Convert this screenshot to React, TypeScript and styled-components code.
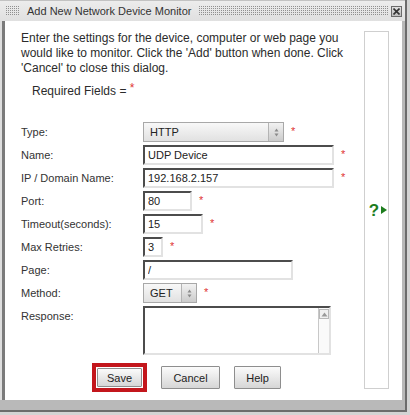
import styled, { createGlobalStyle } from "styled-components";

const GlobalStyle = createGlobalStyle`
  html, body {
    margin: 0;
    padding: 0;
    background: #d4d4d4;
  }
  body {
    font-family: "Liberation Sans", Arial, sans-serif;
  }
`;

type Row = {
  label: string;
  kind: "input" | "select" | "area";
  value?: string;
  width: number;
  required?: boolean;
};

const rows: Row[] = [
  { label: "Type:", kind: "select", value: "HTTP", width: 141, required: true },
  { label: "Name:", kind: "input", value: "UDP Device", width: 191, required: true },
  { label: "IP / Domain Name:", kind: "input", value: "192.168.2.157", width: 191, required: true },
  { label: "Port:", kind: "input", value: "80", width: 49, required: true },
  { label: "Timeout(seconds):", kind: "input", value: "15", width: 60, required: true },
  { label: "Max Retries:", kind: "input", value: "3", width: 20, required: true },
  { label: "Page:", kind: "input", value: "/", width: 150 },
  { label: "Method:", kind: "select", value: "GET", width: 54, required: true },
  { label: "Response:", kind: "area", width: 188 },
];

export default function App() {
  return (
    <>
      <GlobalStyle />
      <Window>
        <TitleBar>
          <Dots $w={14} />
          <Title>Add New Network Device Monitor</Title>
          <Dots />
          <CloseButton title="Close">
            <svg width="7" height="7" viewBox="0 0 7 7">
              <path d="M0.5 0.5 L6.5 6.5 M6.5 0.5 L0.5 6.5" stroke="#333" strokeWidth="1.6" />
            </svg>
          </CloseButton>
        </TitleBar>

        <Frame>
          <Main>
            <Intro>
              Enter the settings for the device, computer or web page you would like to
              monitor. Click the 'Add' button when done. Click 'Cancel' to close this dialog.
            </Intro>
            <Required>
              Required Fields = <ReqStar>*</ReqStar>
            </Required>

            <Form>
              {rows.map((r) => (
                <FormRow key={r.label}>
                  <Label>{r.label}</Label>
                  <Field>
                    {r.kind === "input" && <TextInput $w={r.width} defaultValue={r.value} />}
                    {r.kind === "select" && (
                      <SelectBox $w={r.width}>
                        <SelectText>{r.value}</SelectText>
                        <Spinner>
                          <svg width="5" height="9" viewBox="0 0 5 9">
                            <path d="M2.5 0.5 L4.5 3.5 L0.5 3.5 Z" fill="#8a8a8a" />
                            <path d="M2.5 8.5 L4.5 5.5 L0.5 5.5 Z" fill="#8a8a8a" />
                          </svg>
                        </Spinner>
                      </SelectBox>
                    )}
                    {r.kind === "area" && (
                      <AreaBox $w={r.width}>
                        <AreaText />
                        <ScrollBar>
                          <ScrollButton>
                            <svg width="7" height="5" viewBox="0 0 7 5">
                              <path d="M3.5 0.5 L6.5 4.5 L0.5 4.5 Z" fill="#9a9a9a" />
                            </svg>
                          </ScrollButton>
                        </ScrollBar>
                      </AreaBox>
                    )}
                    {r.required && <Star>*</Star>}
                  </Field>
                </FormRow>
              ))}
            </Form>

            <Buttons>
              <SaveFrame>
                <Button $w={45} $h={19}>Save</Button>
              </SaveFrame>
              <Button $w={59} $h={23}>Cancel</Button>
              <Button $w={47} $h={23}>Help</Button>
            </Buttons>
          </Main>

          <HelpRail>
            <HelpIcon>
              <QMark>?</QMark>
              <svg width="6" height="8" viewBox="0 0 6 8">
                <path d="M0 0 L6 4 L0 8 Z" fill="#1d7d1d" />
              </svg>
            </HelpIcon>
          </HelpRail>
        </Frame>
      </Window>
    </>
  );
}

const Window = styled.div`
  width: 407px;
  height: 412px;
  box-sizing: border-box;
  border-right: 2px solid #6c6c6c;
  border-bottom: 2px solid #6c6c6c;
  background: #b9b9b9;
  display: flex;
  flex-direction: column;
`;

const TitleBar = styled.div`
  height: 21px;
  box-sizing: border-box;
  border-top: 1px solid #c2c2c2;
  background: linear-gradient(#ececec, #e0e0e0);
  display: flex;
  align-items: center;
  padding: 0 3px 0 5px;
`;

const Dots = styled.div<{ $w?: number }>`
  ${(p) => (p.$w ? `width: ${p.$w}px;` : "flex: 1;")}
  height: 10px;
  background: conic-gradient(#909090 25%, transparent 0) 0 0 / 2px 2px;
`;

const Title = styled.span`
  margin: 0 7px 0 8px;
  font-size: 11px;
  color: #333;
  white-space: nowrap;
`;

const CloseButton = styled.div`
  width: 11px;
  height: 11px;
  box-sizing: border-box;
  margin-left: 3px;
  border: 1px solid #6a6a6a;
  background: linear-gradient(#e0e0e0, #bdbdbd);
  display: flex;
  align-items: center;
  justify-content: center;
`;

const Frame = styled.div`
  flex: 1;
  display: flex;
  margin: 0 3px 10px 2px;
  border-left: 3px solid #7b7b7b;
  box-shadow: -2px 0 0 #dedede;
  background: #fff;
`;

const Main = styled.div`
  flex: 1;
  padding: 10px 0 0 16px;
  color: #2b2b2b;
`;

const Intro = styled.p`
  margin: 0;
  font-size: 12px;
  line-height: 15px;
`;

const Required = styled.div`
  margin: 8px 0 0 11px;
  font-size: 12px;
  line-height: 15px;
`;

const ReqStar = styled.span`
  color: #e03434;
  font-size: 12px;
  vertical-align: top;
  position: relative;
  top: -3px;
`;

const Star = styled.span`
  color: #e03434;
  font-size: 11px;
  line-height: 1;
  padding-top: 4px;
`;

const Form = styled.div`
  margin-top: 23px;
  display: flex;
  flex-direction: column;
  gap: 3px;
`;

const FormRow = styled.div`
  display: grid;
  grid-template-columns: 122px 1fr;
`;

const Label = styled.div`
  font-size: 11px;
  line-height: 20px;
  color: #333;
`;

const Field = styled.div`
  display: flex;
  align-items: flex-start;
  gap: 7px;
`;

const TextInput = styled.input<{ $w: number }>`
  width: ${(p) => p.$w}px;
  height: 20px;
  box-sizing: border-box;
  margin: 0;
  padding: 0 3px;
  border-style: solid;
  border-width: 2px;
  border-color: #4c4c4c #e2e2e2 #e2e2e2 #4c4c4c;
  background: #fff;
  font-family: "Liberation Sans", Arial, sans-serif;
  font-size: 11px;
  color: #222;
  outline: none;
`;

const SelectBox = styled.div<{ $w: number }>`
  width: ${(p) => p.$w}px;
  height: 20px;
  box-sizing: border-box;
  border: 1px solid #a8a8a8;
  background: linear-gradient(#f8f8f8, #e1e1e1);
  display: flex;
`;

const SelectText = styled.span`
  flex: 1;
  padding-left: 6px;
  font-size: 11px;
  line-height: 18px;
  color: #222;
`;

const Spinner = styled.span`
  width: 15px;
  box-sizing: border-box;
  border-left: 1px solid #b4b4b4;
  background: linear-gradient(#f2f2f2, #cbcbcb);
  display: flex;
  align-items: center;
  justify-content: center;
`;

const AreaBox = styled.div<{ $w: number }>`
  width: ${(p) => p.$w}px;
  height: 49px;
  box-sizing: border-box;
  border-style: solid;
  border-width: 2px;
  border-color: #4c4c4c #e2e2e2 #e2e2e2 #4c4c4c;
  display: flex;
`;

const AreaText = styled.div`
  flex: 1;
`;

const ScrollBar = styled.div`
  width: 11px;
  box-sizing: border-box;
  border-left: 1px solid #c8c8c8;
  padding-top: 1px;
  background: #fafafa;
`;

const ScrollButton = styled.div`
  height: 10px;
  box-sizing: border-box;
  border: 1px solid #b8b8b8;
  background: #f0f0f0;
  display: flex;
  align-items: center;
  justify-content: center;
`;

const Buttons = styled.div`
  margin-top: 8px;
  padding-left: 71px;
  display: flex;
  align-items: center;
  gap: 14px;
`;

const SaveFrame = styled.div`
  border: 4px solid #c3161c;
  padding: 1px;
  display: flex;
`;

const Button = styled.button<{ $w: number; $h: number }>`
  width: ${(p) => p.$w}px;
  height: ${(p) => p.$h}px;
  box-sizing: border-box;
  margin: 0;
  padding: 0;
  border: 1px solid #8e8e8e;
  border-radius: 1px;
  background: linear-gradient(#fbfbfb, #d6d6d6);
  font-family: "Liberation Sans", Arial, sans-serif;
  font-size: 11px;
  color: #222;
`;

const HelpRail = styled.div`
  width: 25px;
  margin: 10px 13px 11px 0;
  box-sizing: border-box;
  border: 1px solid #cfcfcf;
  display: flex;
  align-items: center;
  justify-content: center;
`;

const HelpIcon = styled.div`
  display: flex;
  align-items: center;
  gap: 2px;
  margin-left: 3px;
`;

const QMark = styled.span`
  font-size: 17px;
  font-weight: bold;
  line-height: 1;
  color: #1d7d1d;
`;
